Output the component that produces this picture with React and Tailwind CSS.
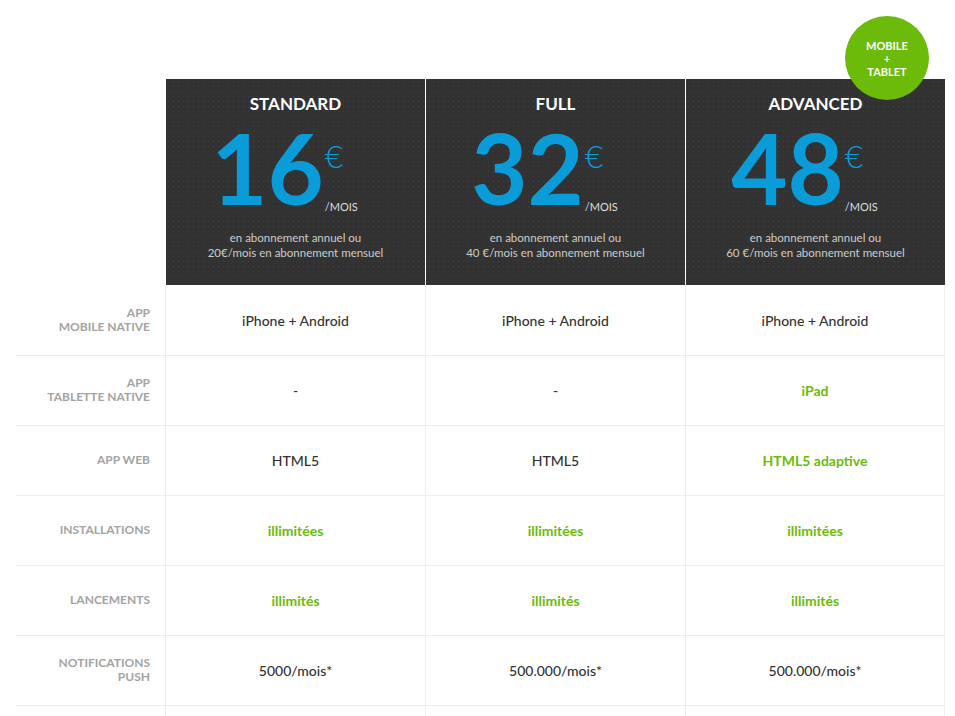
import React from "react";

const plans = [
  { name: "STANDARD", price: "16", alt: "20€/mois" },
  { name: "FULL", price: "32", alt: "40 €/mois" },
  { name: "ADVANCED", price: "48", alt: "60 €/mois" },
];

const rows = [
  { label: ["APP", "MOBILE NATIVE"], values: [["iPhone + Android", 0], ["iPhone + Android", 0], ["iPhone + Android", 0]] },
  { label: ["APP", "TABLETTE NATIVE"], values: [["-", 0], ["-", 0], ["iPad", 1]] },
  { label: ["APP WEB"], values: [["HTML5", 0], ["HTML5", 0], ["HTML5 adaptive", 1]] },
  { label: ["INSTALLATIONS"], values: [["illimitées", 1], ["illimitées", 1], ["illimitées", 1]] },
  { label: ["LANCEMENTS"], values: [["illimités", 1], ["illimités", 1], ["illimités", 1]] },
  { label: ["NOTIFICATIONS", "PUSH"], values: [["5000/mois*", 0], ["500.000/mois*", 0], ["500.000/mois*", 0]] },
  { label: [""], values: [["", 0], ["", 0], ["", 0]] },
];

export default function App() {
  return (
    <div className="min-h-[716px] bg-white pt-[79px] pl-4 font-['Lato','Liberation_Sans',sans-serif] overflow-hidden">
      <div className="relative w-[929px]">
        {/* badge */}
        <div className="absolute right-[16px] top-[-63px] z-10 flex h-[84px] w-[84px] flex-col items-center justify-center rounded-full bg-[#6cba0a] text-center text-[11px] font-bold leading-[13px] text-white">
          <span>MOBILE</span>
          <span>+</span>
          <span>TABLET</span>
        </div>

        {/* header */}
        <div className="grid grid-cols-[150px_260px_260px_259px]">
          <div />
          {plans.map((p, i) => (
            <div
              key={p.name}
              className={`flex h-[206px] flex-col items-center bg-[#323232] bg-[image:radial-gradient(circle,#3f3f3f_0.7px,transparent_1px)] bg-[size:5px_5px] pt-[15px] text-center ${i < 2 ? "border-r border-white" : ""}`}
            >
              <div className="h-[20px] text-[17px] font-bold leading-[20px] text-white">{p.name}</div>
              <div className="mt-[6px] mr-[22px] flex h-[96px] items-start">
                <div className="h-[96px] text-[97px] font-bold leading-[96px] text-[#0a9bd9]">{p.price}</div>
                <div className="ml-[1px] flex flex-col items-start">
                  <div className="mt-[20px] h-[32px] text-[32px] font-light leading-[32px] text-[#0a9bd9]">€</div>
                  <div className="mt-[29px] text-[11px] leading-[12px] text-[#dddddd]">/MOIS</div>
                </div>
              </div>
              <div className="mt-[14px] text-[11.5px] leading-[15px] text-[#cccccc]">
                <div>en abonnement annuel ou</div>
                <div>{p.alt} en abonnement mensuel</div>
              </div>
            </div>
          ))}
        </div>

        {/* body */}
        <div className="mt-[1px]">
          {rows.map((r, ri) => (
            <div key={ri} className="grid h-[70px] grid-cols-[150px_260px_260px_259px] border-b border-[#eeeeee]">
              <div className="flex flex-col items-end justify-center border-r border-[#eeeeee] pb-[1px] pr-[15px] text-right text-[12px] font-bold leading-[14px] text-[#a3a3a3]">
                {r.label.map((l, li) => (
                  <span key={li}>{l}</span>
                ))}
              </div>
              {r.values.map(([v, g], vi) => (
                <div
                  key={vi}
                  className={`flex items-center justify-center border-r border-[#eeeeee] pb-[1px] text-[14px] ${g ? "font-bold text-[#6cba0a]" : "font-medium text-[#333333]"}`}
                >
                  {v}
                </div>
              ))}
            </div>
          ))}
        </div>
      </div>
    </div>
  );
}
